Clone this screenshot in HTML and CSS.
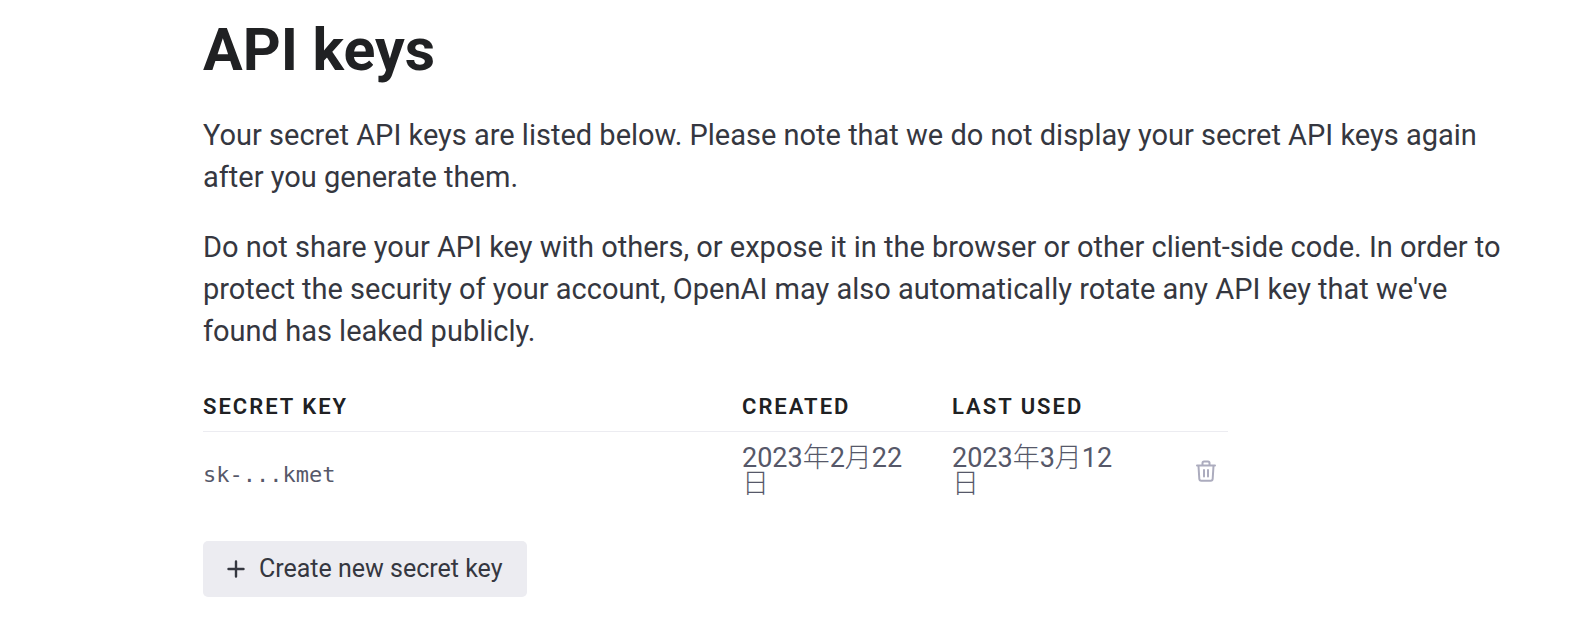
FILE: index.html
```html
<!DOCTYPE html>
<html lang="en">
<head>
<meta charset="utf-8">
<meta name="viewport" content="width=device-width, initial-scale=1">
<title>API keys</title>
<link rel="stylesheet" href="styles.css">
</head>
<body>
<main class="page">
  <h1 class="title">API keys</h1>
  <p class="text">Your secret API keys are listed below. Please note that we do not display your secret API keys again after you generate them.</p>
  <p class="text">Do not share your API key with others, or expose it in the browser or other client-side code. In order to protect the security of your account, OpenAI may also automatically rotate any API key that we've found has leaked publicly.</p>
  <table class="keys">
    <thead>
      <tr>
        <th class="col-key" scope="col">Secret key</th>
        <th class="col-date" scope="col">Created</th>
        <th class="col-date" scope="col">Last used</th>
        <td class="col-action"></td>
      </tr>
    </thead>
    <tbody>
      <tr>
        <td class="key">sk-...kmet</td>
        <td class="date">2023年2月22日</td>
        <td class="date">2023年3月12日</td>
        <td class="action">
          <button class="delete" type="button" aria-label="Delete key">
            <svg class="icon-trash" viewBox="0 0 20 22" fill="none" stroke="currentColor" stroke-width="2" stroke-linecap="round" stroke-linejoin="round" aria-hidden="true">
              <path d="M1 5.500h18M6.500 5V3a1.500 1.500 0 0 1 1.500-1.500h4A1.500 1.500 0 0 1 13.500 3V5M2.500 6l.8 12.800a2 2 0 0 0 2 1.900h9.400a2 2 0 0 0 2-1.900L17.500 6M8 10v6.500M12 10v6.500"/>
            </svg>
          </button>
        </td>
      </tr>
    </tbody>
  </table>
  <button class="create" type="button">
    <svg class="icon-plus" viewBox="0 0 18 18" fill="none" stroke="currentColor" stroke-width="2.400" stroke-linecap="round" aria-hidden="true"><path d="M9 1.500v15M1.500 9h15"/></svg>
    Create new secret key
  </button>
</main>
</body>
</html>
```
FILE: styles.css
```css
* {
  box-sizing: border-box;
}

body {
  margin: 0;
  background: #fff;
  color: #353740;
  font-family: Roboto, "Noto Sans CJK SC", sans-serif;
}

.page {
  padding: 16px 80px 40px 203px;
}

.title {
  margin: 0 0 30px;
  color: #202123;
  font-size: 59px;
  font-weight: 700;
  line-height: 68px;
}

.text {
  margin: 0 0 28px;
  font-size: 29px;
  line-height: 42px;
}

.keys {
  width: 100%;
  max-width: 1025px;
  border-collapse: collapse;
  table-layout: fixed;
}

.keys thead th,
.keys thead td {
  padding: 14px 0 11px;
  border-bottom: 1px solid #ececf1;
  color: #202123;
  font-size: 22px;
  font-weight: 600;
  line-height: 26px;
  letter-spacing: 2px;
  text-align: left;
  text-transform: uppercase;
}

.keys .col-date {
  width: 210px;
}

.keys .col-action {
  width: 66px;
}

.keys tbody td {
  padding: 13px 0 15px;
  color: #565869;
  vertical-align: middle;
}

.keys tbody .key {
  padding: 16px 0 12px;
  font-family: "DejaVu Sans Mono", monospace;
  font-size: 22px;
}

.keys tbody .date {
  padding-right: 40px;
  font-family: Roboto, "Noto Sans CJK SC Light", "Noto Sans CJK SC", sans-serif;
  font-size: 27px;
  line-height: 26px;
}

.keys tbody .action {
  padding: 14px 12px 12px 0;
  text-align: right;
}

.delete {
  padding: 0;
  border: 0;
  background: none;
  color: #acacbe;
  cursor: pointer;
}

.icon-trash {
  display: block;
  width: 20px;
  height: 22px;
}

.create {
  display: flex;
  align-items: center;
  gap: 14px;
  margin-top: 29px;
  padding: 12px 24px;
  border: 0;
  border-radius: 5px;
  background: #ececf1;
  color: #353740;
  font-family: inherit;
  font-size: 25px;
  line-height: 32px;
  cursor: pointer;
}

.icon-plus {
  width: 18px;
  height: 18px;
}
```
